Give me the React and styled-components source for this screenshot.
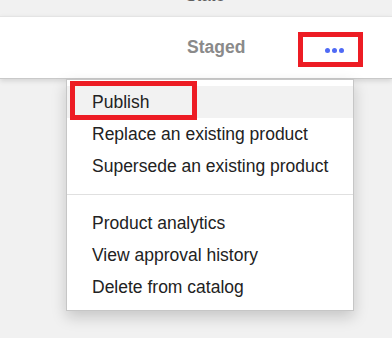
import React from 'react';
import styled, { createGlobalStyle } from 'styled-components';

const GlobalStyle = createGlobalStyle`
  html, body {
    margin: 0;
    padding: 0;
    background: #f1f1f1;
    font-family: "Liberation Sans", Arial, sans-serif;
  }
`;

const Page = styled.div`
  position: relative;
  width: 392px;
  height: 338px;
  overflow: hidden;
  background: #f1f1f1;
`;

const HeaderStrip = styled.div`
  height: 16px;
  overflow: hidden;
  display: flex;
  align-items: flex-end;
  justify-content: center;
  padding-left: 18px;
  box-sizing: border-box;
`;

const HeaderLabel = styled.span`
  font-size: 17px;
  line-height: 16px;
  color: #5f5f5f;
  margin-bottom: 12px;
`;

const Row = styled.div`
  height: 63px;
  background: #fff;
  border-top: 1px solid #e4e4e4;
  border-bottom: 1px solid #c9c9c9;
  box-shadow: 0 2px 5px rgba(0, 0, 0, 0.12);
  display: flex;
  align-items: center;
  box-sizing: border-box;
  padding-left: 187px;
`;

const Status = styled.span`
  font-size: 17.5px;
  font-weight: bold;
  color: #8a8a8a;
  width: 111px;
`;

const MoreButton = styled.button`
  width: 65px;
  height: 35px;
  margin-top: 3px;
  border: 5px solid #ed1c24;
  background: #fff;
  display: flex;
  align-items: center;
  justify-content: center;
  gap: 2px;
  padding: 2px 0 0 7px;
  box-sizing: border-box;
  cursor: pointer;
`;

const Dot = styled.span`
  width: 5px;
  height: 5px;
  border-radius: 50%;
  background: #4f6af5;
`;

const Menu = styled.div`
  position: absolute;
  top: 79px;
  left: 66px;
  width: 288px;
  background: #fff;
  border: 1px solid #c6c6c6;
  box-shadow: 0 6px 14px rgba(0, 0, 0, 0.18);
  padding: 6px 0 7px;
  box-sizing: border-box;
`;

const Item = styled.div`
  position: relative;
  height: 32px;
  display: flex;
  align-items: center;
  padding-left: 25px;
  padding-top: 1px;
  box-sizing: border-box;
  font-size: 17.5px;
  color: #222;
  background: ${(p) => (p.$active ? '#f2f2f2' : 'transparent')};
`;

const Callout = styled.span`
  position: absolute;
  left: 3px;
  top: -5px;
  width: 127px;
  height: 39px;
  border: 5px solid #ed1c24;
  box-sizing: border-box;
  pointer-events: none;
`;

const Divider = styled.div`
  height: 1px;
  background: #e0e0e0;
  margin: 12px 0;
`;

const groups = [
  ['Publish', 'Replace an existing product', 'Supersede an existing product'],
  ['Product analytics', 'View approval history', 'Delete from catalog'],
];

export default function App() {
  return (
    <Page>
      <GlobalStyle />
      <HeaderStrip>
        <HeaderLabel>State</HeaderLabel>
      </HeaderStrip>
      <Row>
        <Status>Staged</Status>
        <MoreButton aria-label="More actions">
          <Dot />
          <Dot />
          <Dot />
        </MoreButton>
      </Row>
      <Menu>
        {groups.map((group, gi) => (
          <React.Fragment key={gi}>
            {gi > 0 && <Divider />}
            {group.map((label) => (
              <Item key={label} $active={label === 'Publish'}>
                {label}
                {label === 'Publish' && <Callout />}
              </Item>
            ))}
          </React.Fragment>
        ))}
      </Menu>
    </Page>
  );
}
